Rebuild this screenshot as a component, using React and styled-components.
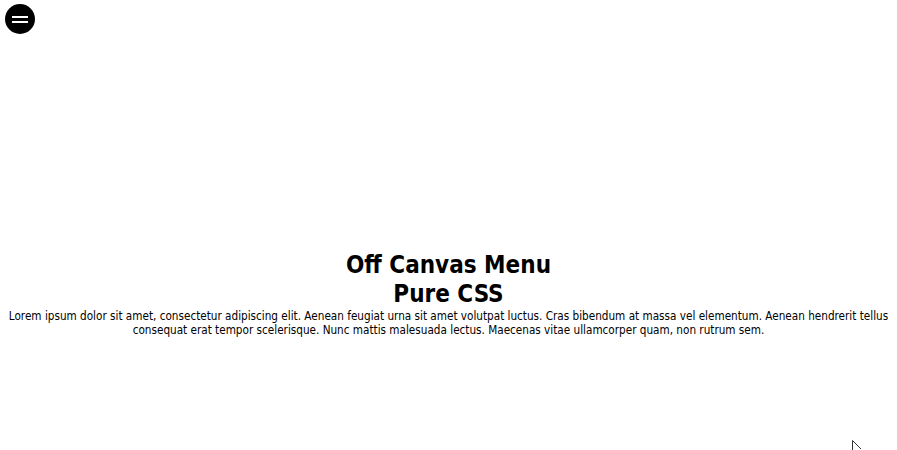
import React from "react";
import styled, { createGlobalStyle } from "styled-components";

const Global = createGlobalStyle`
  html, body { margin: 0; padding: 0; background: #fff; }
  body { margin: 8px; font-family: "DejaVu Sans Condensed", "DejaVu Sans", sans-serif; color: #000; }
`;

const MenuButton = styled.button`
  position: fixed;
  top: 4px;
  left: 5px;
  width: 30px;
  height: 30px;
  border-radius: 50%;
  background: #000;
  border: none;
  padding: 0;
  display: flex;
  flex-direction: column;
  align-items: center;
  justify-content: center;
  gap: 3px;
  cursor: pointer;
`;

const Bar = styled.span`
  display: block;
  width: 16px;
  height: 2px;
  background: #fff;
`;

const Main = styled.main`
  padding-top: 243px;
  text-align: center;
`;

const Title = styled.h1`
  margin: 0;
  font-size: 24px;
  line-height: 29px;
  font-weight: bold;
`;

const Text = styled.p`
  margin: 0;
  font-size: 11.65px;
  line-height: 14px;
`;

const Cursor = styled.svg`
  position: fixed;
  left: 851px;
  top: 439px;
`;

export default function App() {
  return (
    <>
      <Global />
      <MenuButton aria-label="menu">
        <Bar />
        <Bar />
      </MenuButton>
      <Main>
        <Title>
          Off Canvas Menu
          <br />
          Pure CSS
        </Title>
        <Text>
          Lorem ipsum dolor sit amet, consectetur adipiscing elit. Aenean feugiat urna sit amet volutpat luctus. Cras bibendum at massa vel elementum. Aenean hendrerit tellus consequat erat tempor scelerisque. Nunc mattis malesuada lectus. Maecenas vitae ullamcorper quam, non rutrum sem.
        </Text>
      </Main>
      <Cursor width="12" height="12" viewBox="0 0 12 12">
        <path d="M1.5 11 V1.5 L10 10" fill="none" stroke="#333" strokeWidth="1" />
      </Cursor>
    </>
  );
}
